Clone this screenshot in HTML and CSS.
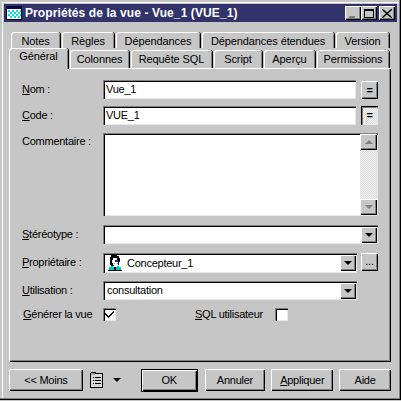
FILE: index.html
```html
<!DOCTYPE html>
<html lang="fr">
<head>
<meta charset="UTF-8" />
<title>Propriétés de la vue</title>
<link rel="stylesheet" href="styles.css">
</head>
<body>
<div class="window">
  <div class="titlebar">
    <svg class="title-icon" width="16" height="14" viewBox="0 0 16 14">
      <rect x="0.5" y="0.5" width="15" height="13" fill="#fff" stroke="#000"/>
      <rect x="1" y="1" width="14" height="2" fill="#000080"/>
      <path d="M2 4h2v2H2zM6 4h2v2H6zM10 4h2v2h-2zM14 4h1v2h-1zM4 6h2v2H4zM8 6h2v2H8zM12 6h2v2h-2zM2 8h2v2H2zM6 8h2v2H6zM10 8h2v2h-2zM14 8h1v2h-1zM4 10h2v2H4zM8 10h2v2H8zM12 10h2v2h-2z" fill="#00e0e0"/>
    </svg>
    <span class="title-text">Propriétés de la vue - Vue_1 (VUE_1)</span>
    <div class="title-buttons">
      <span class="title-btn"><svg width="10" height="9" viewBox="0 0 10 9"><rect x="1" y="7" width="6" height="2" fill="#808080"/></svg></span>
      <span class="title-btn title-btn-gap"><svg width="10" height="9" viewBox="0 0 10 9"><path d="M0 0h10v9H0z M1 2v6h8V2z" fill="#000" fill-rule="evenodd"/></svg></span>
      <span class="title-btn"><svg width="10" height="9" viewBox="0 0 10 9"><path d="M1 0l4 3.500 4-3.500h1v1L6 4.500l4 3.500v1H9L5 5.500 1 9H0V8l4-3.500L0 1V0z" fill="#000"/></svg></span>
    </div>
  </div>

  <div class="tabs tabs-back">
    <div class="tab w-notes">Notes</div>
    <div class="tab w-regles">Règles</div>
    <div class="tab w-dep">Dépendances</div>
    <div class="tab w-depet">Dépendances étendues</div>
    <div class="tab w-version">Version</div>
  </div>
  <div class="tabs tabs-front">
    <div class="tab tab-active w-general">Général</div>
    <div class="tab w-colonnes">Colonnes</div>
    <div class="tab w-requete">Requête SQL</div>
    <div class="tab w-script">Script</div>
    <div class="tab w-apercu">Aperçu</div>
    <div class="tab w-permissions">Permissions</div>
  </div>

  <div class="panel">
    <div class="row">
      <label class="lbl"><u>N</u>om :</label>
      <div class="field field-nom">Vue_1</div>
      <div class="btn small-btn eq">=</div>
    </div>
    <div class="row">
      <label class="lbl"><u>C</u>ode :</label>
      <div class="field field-nom">VUE_1</div>
      <div class="small-btn eq eq-on">=</div>
    </div>
    <div class="row">
      <label class="lbl lbl-top">Commentaire :</label>
      <div class="field field-area">
        <div class="scrollbar">
          <div class="btn scroll-btn"><span class="arrow-up"></span></div>
          <div class="btn scroll-btn"><span class="arrow-down arrow-off"></span></div>
        </div>
      </div>
    </div>
    <div class="row">
      <label class="lbl"><u>S</u>téréotype :</label>
      <div class="field field-full combo">
        <span class="combo-text"></span>
        <div class="btn combo-btn"><span class="arrow-down"></span></div>
      </div>
    </div>
    <div class="row">
      <label class="lbl"><u>P</u>ropriétaire :</label>
      <div class="field field-short field-tall combo">
        <svg class="person" width="14" height="16" viewBox="0 0 14 16" shape-rendering="crispEdges">
          <path d="M3 0h6v1h2v2h1v4h-1v3h-1V5H9V3H5v2H4v3h1v2h1v1H3v-1H2V2h1z" fill="#000"/>
          <path d="M5 3h4v2h1v5H9v1H6v-1H5V8H4V5h1z" fill="#fff"/>
          <path d="M7 5h3v2H7z" fill="#2030c0"/>
          <path d="M6 8h1v1H6zM9 8h1v1H9z" fill="#808080"/>
          <path d="M3 11h2v1h4v-1h2v1h2v3H1v-3h2z" fill="#00c8c8"/>
          <path d="M6 12h2v3H6zM0 15h14v1H0z" fill="#000"/>
        </svg>
        <span class="combo-text">Concepteur_1</span>
        <div class="btn combo-btn"><span class="arrow-down"></span></div>
      </div>
      <div class="btn small-btn dots">...</div>
    </div>
    <div class="row">
      <label class="lbl"><u>U</u>tilisation :</label>
      <div class="field field-short combo">
        <span class="combo-text">consultation</span>
        <div class="btn combo-btn"><span class="arrow-down"></span></div>
      </div>
    </div>
    <div class="row row-checks">
      <label class="lbl lbl-check"><u>G</u>énérer la vue</label>
      <div class="check">
        <svg width="9" height="9" viewBox="0 0 9 9" shape-rendering="crispEdges"><path d="M8 1h1v2H8v1H7v1H6v1H5v1H4v1H3V7H2V6H1V5H0V3h1v1h1v1h1v1h1V5h1V4h1V3h1V2h1z" fill="#000"/></svg>
      </div>
      <label class="lbl-sql"><u>S</u>QL utilisateur</label>
      <div class="check"></div>
    </div>
  </div>

  <div class="footer">
    <div class="btn foot-btn w-moins">&lt;&lt; Moins</div>
    <svg class="list-icon" width="14" height="16" viewBox="0 0 14 16" shape-rendering="crispEdges">
      <path d="M1 0h5v1h7v15H0V1h1z" fill="#000"/>
      <path d="M1 1h4v1h7v13H1z" fill="#d8d8d8"/>
      <path d="M1 1h4v2H1z" fill="#a0a0a0"/>
      <path d="M3 5h1v1H3zM5 5h6v1H5zM3 8h1v1H3zM5 8h6v1H5zM3 11h1v1H3zM5 11h6v1H5z" fill="#000"/>
    </svg>
    <span class="arrow-down list-arrow"></span>
    <div class="btn foot-btn btn-default w-ok">OK</div>
    <div class="btn foot-btn w-annuler">Annuler</div>
    <div class="btn foot-btn w-appliquer"><span><u>A</u>ppliquer</span></div>
    <div class="btn foot-btn w-aide">Aide</div>
  </div>
</div>
</body>
</html>
```

FILE: styles.css
```css
* {
  box-sizing: border-box;
}
body {
  margin: 0;
  background: #c6c6c6;
  font-family: "Liberation Sans", Arial, sans-serif;
  font-size: 11px;
  letter-spacing: -0.25px;
  color: #000;
}
.window {
  width: 401px;
  height: 400px;
  padding: 4px 3px 0 4px;
  background: #c6c6c6;
  overflow: hidden;
  box-shadow: inset -1px -1px 0 #000, inset -2px -2px 0 #808080, inset 2px 2px 0 #c6c6c6, inset 3px 3px 0 #fff;
}

/* Title bar */
.titlebar {
  height: 18px;
  width: 393px;
  background: #33336b;
  color: #fff;
  display: flex;
  align-items: center;
  padding: 0 2px;
}
.title-icon {
  margin-right: 3px;
}
.title-text {
  font-weight: 700;
  font-size: 12px;
  letter-spacing: 0.1px;
  white-space: nowrap;
}
.title-buttons {
  display: flex;
  margin-left: auto;
}
.title-btn {
  width: 16px;
  height: 14px;
  background: #c6c6c6;
  display: flex;
  align-items: center;
  justify-content: center;
  box-shadow: inset 1px 1px 0 #fff, inset -1px -1px 0 #000, inset -2px -2px 0 #808080;
}
.title-btn-gap {
  margin-right: 2px;
}

/* Tabs */
.tabs {
  display: flex;
}
.tabs-back {
  margin-top: 10px;
  padding-left: 7px;
  gap: 2px;
  height: 16px;
}
.tabs-front {
  padding-left: 5px;
  gap: 2px;
  height: 20px;
  align-items: flex-end;
  position: relative;
  z-index: 1;
}
.tab {
  height: 100%;
  background: #c6c6c6;
  border-radius: 3px 3px 0 0;
  text-align: center;
  line-height: 18px;
  letter-spacing: -0.1px;
  white-space: nowrap;
  box-shadow: inset 1px 1px 0 #fff, inset -1px 0 0 #808080, 1px 0 0 #000;
}
.tabs-back .tab {
  height: 16px;
}
.tabs-front .tab {
  height: 18px;
}
.tabs-front .tab-active {
  height: 21px;
  margin-bottom: -1px;
  line-height: 17px;
}
.w-notes { width: 49px; }
.w-regles { width: 52px; }
.w-dep { width: 84px; }
.w-depet { width: 132px; }
.w-version { width: 53px; }
.w-general { width: 59px; }
.w-colonnes { width: 59px; }
.w-requete { width: 81px; }
.w-script { width: 48px; }
.w-apercu { width: 51px; }
.w-permissions { width: 72px; }

/* Panel */
.panel {
  width: 382px;
  height: 294px;
  margin-left: 5px;
  padding: 12px 13px 0 13px;
  display: grid;
  grid-template-rows: 26px 27px 92px 28px 28px 27px auto;
  align-content: start;
  box-shadow: inset 1px 1px 0 #fff, inset -1px -1px 0 #000, inset -2px -2px 0 #808080;
}
.row {
  display: flex;
  align-items: flex-start;
}
.lbl {
  width: 81px;
  flex: none;
  height: 19px;
  line-height: 19px;
  white-space: nowrap;
}
.lbl-top {
  line-height: 16px;
}
.lbl-check {
  height: 13px;
  line-height: 13px;
  padding-left: 1px;
}
.lbl-sql {
  width: 80px;
  margin-left: 79px;
  height: 13px;
  line-height: 13px;
  white-space: nowrap;
}

/* Fields */
.field {
  background: #fff;
  height: 19px;
  line-height: 19px;
  padding-left: 3px;
  white-space: nowrap;
  box-shadow: inset 1px 1px 0 #808080, inset 2px 2px 0 #000, inset -1px -1px 0 #e8e8e8;
}
.field-nom {
  width: 253px;
}
.field-short {
  width: 254px;
}
.field-full {
  width: 275px;
}
.field-tall {
  height: 20px;
}
.field-area {
  width: 275px;
  height: 83px;
  padding: 0;
  display: flex;
  justify-content: flex-end;
}
.combo {
  display: flex;
  align-items: center;
  padding-left: 4px;
  padding-right: 1px;
}
.combo-text {
  flex: 1;
}
.combo-btn {
  width: 16px;
  height: 16px;
  display: flex;
  align-items: center;
  justify-content: center;
}
.person {
  margin: 0 5px 0 1px;
}

/* Scrollbar */
.scrollbar {
  width: 17px;
  margin: 1px 1px 1px 0;
  display: flex;
  flex-direction: column;
  justify-content: space-between;
  background: repeating-conic-gradient(#f0f0f0 0 25%, #dedede 0 50%) 0 0 / 2px 2px;
}
.scroll-btn {
  height: 16px;
  display: flex;
  align-items: center;
  justify-content: center;
}
.arrow-up {
  width: 0;
  height: 0;
  border-left: 4px solid transparent;
  border-right: 4px solid transparent;
  border-bottom: 4px solid #808080;
}
.arrow-down {
  width: 0;
  height: 0;
  border-left: 4px solid transparent;
  border-right: 4px solid transparent;
  border-top: 4px solid #000;
}
.arrow-off {
  border-top-color: #808080;
}

/* Buttons */
.btn {
  background: #c6c6c6;
  box-shadow: inset 1px 1px 0 #fff, inset -1px -1px 0 #000, inset -2px -2px 0 #808080;
}
.small-btn {
  width: 17px;
  height: 18px;
  margin-left: 5px;
  text-align: center;
  line-height: 18px;
}
.eq {
  font-weight: 700;
  margin-top: 1px;
}
.eq-on {
  height: 19px;
  margin-top: 0;
  background: repeating-conic-gradient(#f0f0f0 0 25%, #dedede 0 50%) 0 0 / 2px 2px;
  box-shadow: inset 1px 1px 0 #000, inset 2px 2px 0 #808080, inset -1px -1px 0 #e8e8e8;
}
.dots {
  margin-left: 4px;
  line-height: 16px;
}
.check {
  width: 13px;
  height: 13px;
  background: #fff;
  display: flex;
  align-items: center;
  justify-content: center;
  box-shadow: inset 1px 1px 0 #808080, inset 2px 2px 0 #000, inset -1px -1px 0 #e8e8e8;
}

/* Footer */
.footer {
  display: flex;
  align-items: flex-start;
  margin: 7px 0 0 5px;
  width: 382px;
}
.foot-btn {
  height: 22px;
  line-height: 22px;
  text-align: center;
  white-space: nowrap;
}
.w-moins { width: 74px; }
.w-ok { width: 57px; height: 23px; margin-left: 20px; }
.w-annuler { width: 61px; margin-left: 7px; }
.w-appliquer { width: 62px; margin-left: 6px; }
.w-aide { width: 52px; margin-left: 6px; }
.btn-default {
  box-shadow: inset 0 0 0 1px #000, inset 2px 2px 0 #fff, inset -2px -2px 0 #000, inset -3px -3px 0 #808080;
}
.list-icon {
  margin: 3px 0 0 7px;
}
.list-arrow {
  margin: 9px 0 0 9px;
}
```
